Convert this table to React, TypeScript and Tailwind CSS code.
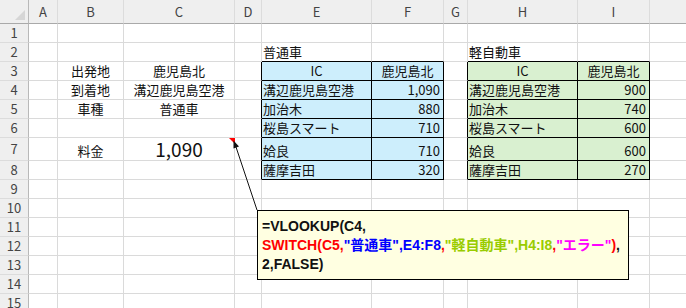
import React from 'react';

type Cell = { t: string; align: 'l' | 'c' | 'r'; big?: boolean };

const colLetters = ['', 'A', 'B', 'C', 'D', 'E', 'F', 'G', 'H', 'I', 'J'];
const rowCount = 15;

// 表の中身（行番号-列番号）
const cells: Record<string, Cell> = {
  '2-5': { t: '普通車', align: 'l' },
  '2-8': { t: '軽自動車', align: 'l' },
  '3-2': { t: '出発地', align: 'c' },
  '3-3': { t: '鹿児島北', align: 'c' },
  '4-2': { t: '到着地', align: 'c' },
  '4-3': { t: '溝辺鹿児島空港', align: 'c' },
  '5-2': { t: '車種', align: 'c' },
  '5-3': { t: '普通車', align: 'c' },
  '7-2': { t: '料金', align: 'c' },
  '7-3': { t: '1,090', align: 'c', big: true },
  '3-5': { t: 'IC', align: 'c' },
  '3-6': { t: '鹿児島北', align: 'c' },
  '3-8': { t: 'IC', align: 'c' },
  '3-9': { t: '鹿児島北', align: 'c' },
};

const names = ['溝辺鹿児島空港', '加治木', '桜島スマート', '姶良', '薩摩吉田'];
const normal = ['1,090', '880', '710', '710', '320'];
const light = ['900', '740', '600', '600', '270'];
names.forEach((n, i) => {
  cells[`${i + 4}-5`] = { t: n, align: 'l' };
  cells[`${i + 4}-6`] = { t: normal[i], align: 'r' };
  cells[`${i + 4}-8`] = { t: n, align: 'l' };
  cells[`${i + 4}-9`] = { t: light[i], align: 'r' };
});

const inTable = (r: number) => r >= 3 && r <= 8;

const SheetCell: React.FC<{ r: number; c: number }> = ({ r, c }) => {
  if (r === 0) {
    return (
      <div
        className={`flex items-center justify-center bg-[#efefef] border-b border-b-[#a9a9a9] text-[13px] text-[#444] ${
          c === 0 ? 'border-r border-r-[#b8b8b8]' : 'border-r border-r-[#dcdcdc]'
        }`}
      >
        {c === 0 ? (
          <svg width="29" height="24" className="block">
            <polygon points="25,10 25,20 15,20" fill="#d6d6d6" />
          </svg>
        ) : (
          colLetters[c]
        )}
      </div>
    );
  }
  if (c === 0) {
    return (
      <div className="flex items-center justify-center bg-[#efefef] border-r border-r-[#b8b8b8] border-b border-b-[#dcdcdc] text-[13px] text-[#444]">
        {r}
      </div>
    );
  }

  const rightBlack = inTable(r) && (c === 4 || c === 5 || c === 6 || c === 7 || c === 8 || c === 9);
  const bottomBlack = r >= 2 && r <= 8 && (c === 5 || c === 6 || c === 8 || c === 9);
  const blue = inTable(r) && (c === 5 || c === 6);
  const green = inTable(r) && (c === 8 || c === 9);
  const cell = cells[`${r}-${c}`];

  return (
    <div
      className={`flex items-end overflow-visible whitespace-nowrap border-r border-b ${
        rightBlack ? 'border-r-black' : 'border-r-[#dadada]'
      } ${bottomBlack ? 'border-b-black' : 'border-b-[#dadada]'} ${
        blue ? 'bg-[#cdeefc]' : green ? 'bg-[#d9f0d0]' : 'bg-white'
      } ${
        cell?.align === 'c' ? 'justify-center' : cell?.align === 'r' ? 'justify-end pr-[3px]' : 'justify-start pl-[1px]'
      }`}
    >
      {cell && (
        <span
          className={
            cell.big
              ? 'text-[19px] leading-[22px] text-[#111]'
              : 'text-[13px] leading-[18px] text-[#111]'
          }
        >
          {cell.t}
        </span>
      )}
    </div>
  );
};

export default function App() {
  const rows = Array.from({ length: rowCount + 1 }, (_, r) => r);
  const cols = Array.from({ length: 11 }, (_, c) => c);

  return (
    <div
      className="relative w-[686px] h-[308px] overflow-hidden bg-white"
      style={{ fontFamily: '"Noto Sans CJK JP", "Liberation Sans", sans-serif' }}
    >
      <div className="grid grid-cols-[29px_29px_66px_111px_27px_110px_72px_24px_110px_72px_80px] grid-rows-[24px_19px_19px_19px_19px_19px_19px_23px_19px_19px_19px_19px_19px_19px_19px_19px]">
        {rows.map((r) => cols.map((c) => <SheetCell key={`${r}-${c}`} r={r} c={c} />))}
      </div>

      {/* コメントの矢印 */}
      <svg className="absolute left-0 top-0" width="686" height="308">
        <polygon points="229,138 235,138 235,144" fill="#ff0000" />
        <line x1="257" y1="210" x2="235" y2="144" stroke="#111" strokeWidth="1" />
        <polygon points="233.5,140.5 239,146.5 233.5,148.5" fill="#111" />
      </svg>

      {/* コメント */}
      <div
        className="absolute left-[257px] top-[210px] w-[372px] h-[70px] bg-[#ffffe1] border border-black pl-[4px] pt-[6px] text-[14px] leading-[19px] font-bold"
        style={{ fontFamily: '"Liberation Sans", "Noto Sans CJK JP", sans-serif' }}
      >
        <div className="text-[#111]">=VLOOKUP(C4,</div>
        <div className="whitespace-nowrap">
          <span className="text-[#ff0000]">SWITCH(C5,</span>
          <span className="text-[#0000ff]">"普通車",E4:F8</span>
          <span className="text-[#ff0000]">,</span>
          <span className="text-[#99cc00]">"軽自動車",H4:I8</span>
          <span className="text-[#ff0000]">,</span>
          <span className="text-[#ff00ff]">"エラー"</span>
          <span className="text-[#ff0000]">)</span>
          <span className="text-[#111]">,</span>
        </div>
        <div className="text-[#111]">2,FALSE)</div>
      </div>
    </div>
  );
}
